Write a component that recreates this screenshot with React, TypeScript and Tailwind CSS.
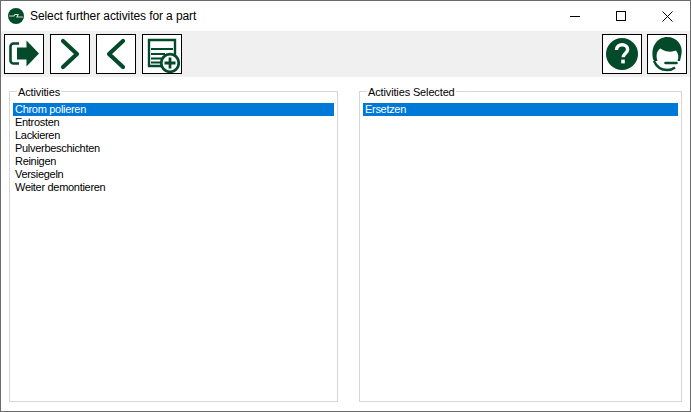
import React from 'react';

const GREEN = '#034a2a';

const activities = [
  'Chrom polieren',
  'Entrosten',
  'Lackieren',
  'Pulverbeschichten',
  'Reinigen',
  'Versiegeln',
  'Weiter demontieren',
];

function ToolButton({ children }: { children: React.ReactNode }) {
  return (
    <button className="w-10 h-10 border border-black bg-white flex items-center justify-center shrink-0">
      {children}
    </button>
  );
}

function ExitIcon() {
  return (
    <svg width="38" height="38" viewBox="1 1 38 38">
      <path d="M15 9.500H9.500a3 3 0 0 0-3 3v14a3 3 0 0 0 3 3H15" fill="none" stroke={GREEN} strokeWidth="2.600" />
      <path d="M13 13.500h9.500V6.500L35 19.500 22.500 32.500v-7H13z" fill={GREEN} />
    </svg>
  );
}

function ChevronIcon({ dir }: { dir: 'left' | 'right' }) {
  return (
    <svg width="38" height="38" viewBox="1 1 38 38">
      <path
        d={dir === 'right' ? 'M13 7l14 13-14 13' : 'M27 7L13 20l14 13'}
        fill="none"
        stroke={GREEN}
        strokeWidth="4.200"
        strokeLinecap="round"
        strokeLinejoin="round"
      />
    </svg>
  );
}

function AddListIcon() {
  return (
    <svg width="38" height="38" viewBox="1 1 38 38">
      <path d="M22 32H7V6h26v17" fill="none" stroke={GREEN} strokeWidth="2.400" />
      <path d="M9 15h22M9 20h14M9 24.500h11M9 28.500h9" fill="none" stroke={GREEN} strokeWidth="2" />
      <circle cx="28" cy="29" r="8.800" fill="#fff" stroke={GREEN} strokeWidth="2.800" />
      <path d="M28 23.500v11M22.500 29h11" stroke={GREEN} strokeWidth="2.800" />
    </svg>
  );
}

function HelpIcon() {
  return (
    <svg width="34" height="34" viewBox="0 0 34 34">
      <circle cx="17" cy="17" r="16" fill={GREEN} />
      <path
        d="M11.500 13c0-3.400 2.500-5.200 5.600-5.200 3.200 0 5.500 1.800 5.500 4.600 0 4-4.400 4-4.400 7.800"
        fill="none"
        stroke="#fff"
        strokeWidth="3.400"
      />
      <rect x="16.200" y="22.600" width="3.600" height="3.800" fill="#fff" />
    </svg>
  );
}

function SupportIcon() {
  return (
    <svg width="38" height="38" viewBox="1 1 38 38">
      {/* hair */}
      <path d="M6 25C3 12 11 3 20 3c10 0 16 8 14.500 17l-1.500 7H7z" fill={GREEN} />
      {/* face */}
      <path d="M10.500 27C8.500 21 10 16.500 13.500 14.500c5 3.500 11 4 15.500 2 2.500 3 3 7 1.500 10.500-1.500 3.500-4.500 6.500-9.500 6.500-5 0-9-2.500-10.500-6.500z" fill="#fff" />
      {/* jaw and mic */}
      <path d="M7 27c2.500 6 8 9 13.500 9 3 0 5.500-1 7.500-2.500" fill="none" stroke={GREEN} strokeWidth="2.400" />
      <path d="M18.500 29h11" stroke={GREEN} strokeWidth="2.600" strokeLinecap="round" />
    </svg>
  );
}

function AppLogo() {
  return (
    <svg width="16" height="16" viewBox="0 0 16 16" className="shrink-0">
      <circle cx="8" cy="8" r="8" fill={GREEN} />
      <path d="M1 8h5l1-1.500h3L9 9h6" fill="none" stroke="#cfe0d6" strokeWidth="1.200" />
    </svg>
  );
}

function WindowButton({ children }: { children: React.ReactNode }) {
  return <button className="w-[46px] h-[30px] flex items-center justify-center">{children}</button>;
}

function ListGroup({ title, items, className }: { title: string; items: string[]; className: string }) {
  return (
    <fieldset className={`border border-[#d6d6d6] h-[318px] ${className}`}>
      <legend className="ml-[7px] px-[1px] pt-[2px] text-[11px] tracking-[-0.140px] leading-[13px] text-black">{title}</legend>
      <ul className="mt-[4px] ml-[3px] text-[11px] tracking-[-0.300px] leading-[13px] text-black">
        {items.map((item, i) => (
          <li key={item} className={i === 0 ? 'bg-[#0078d7] text-white pl-[2px] h-[13px]' : 'pl-[2px] h-[13px]'}>
            {item}
          </li>
        ))}
      </ul>
    </fieldset>
  );
}

export default function App() {
  return (
    <div
      className="w-[691px] h-[412px] bg-white border border-[#6b6b6b] flex flex-col overflow-hidden"
      style={{ fontFamily: '"Liberation Sans", Arial, sans-serif' }}
    >
      {/* Title bar */}
      <div className="h-[30px] flex items-center shrink-0">
        <div className="ml-[7px]">
          <AppLogo />
        </div>
        <span className="ml-[6px] text-[12px] tracking-[-0.090px] text-black">Select further activites for a part</span>
        <div className="ml-auto flex items-center text-black">
          <WindowButton>
            <svg width="10" height="10" viewBox="0 0 10 10" shapeRendering="crispEdges">
              <path d="M0 5.500h10" stroke="#000" />
            </svg>
          </WindowButton>
          <WindowButton>
            <svg width="10" height="10" viewBox="0 0 10 10" shapeRendering="crispEdges">
              <rect x="0.500" y="0.500" width="9" height="9" fill="none" stroke="#000" />
            </svg>
          </WindowButton>
          <WindowButton>
            <svg width="11" height="11" viewBox="0 0 11 11">
              <path d="M.5.500l10 10M10.500.500l-10 10" stroke="#000" strokeWidth="1" />
            </svg>
          </WindowButton>
        </div>
      </div>

      {/* Toolbar */}
      <div className="h-[46px] bg-[#f0f0f0] flex items-center px-[3px] shrink-0">
        <div className="flex gap-[6px]">
          <ToolButton><ExitIcon /></ToolButton>
          <ToolButton><ChevronIcon dir="right" /></ToolButton>
          <ToolButton><ChevronIcon dir="left" /></ToolButton>
          <ToolButton><AddListIcon /></ToolButton>
        </div>
        <div className="ml-auto flex gap-[5px]">
          <ToolButton><HelpIcon /></ToolButton>
          <ToolButton><SupportIcon /></ToolButton>
        </div>
      </div>

      {/* Lists */}
      <div className="flex pl-[8px] pt-[7px]">
        <ListGroup title="Activities" items={activities} className="w-[329px] pr-[3px]" />
        <ListGroup title="Activities Selected" items={['Ersetzen']} className="w-[323px] ml-[21px] pr-[3px]" />
      </div>
    </div>
  );
}
